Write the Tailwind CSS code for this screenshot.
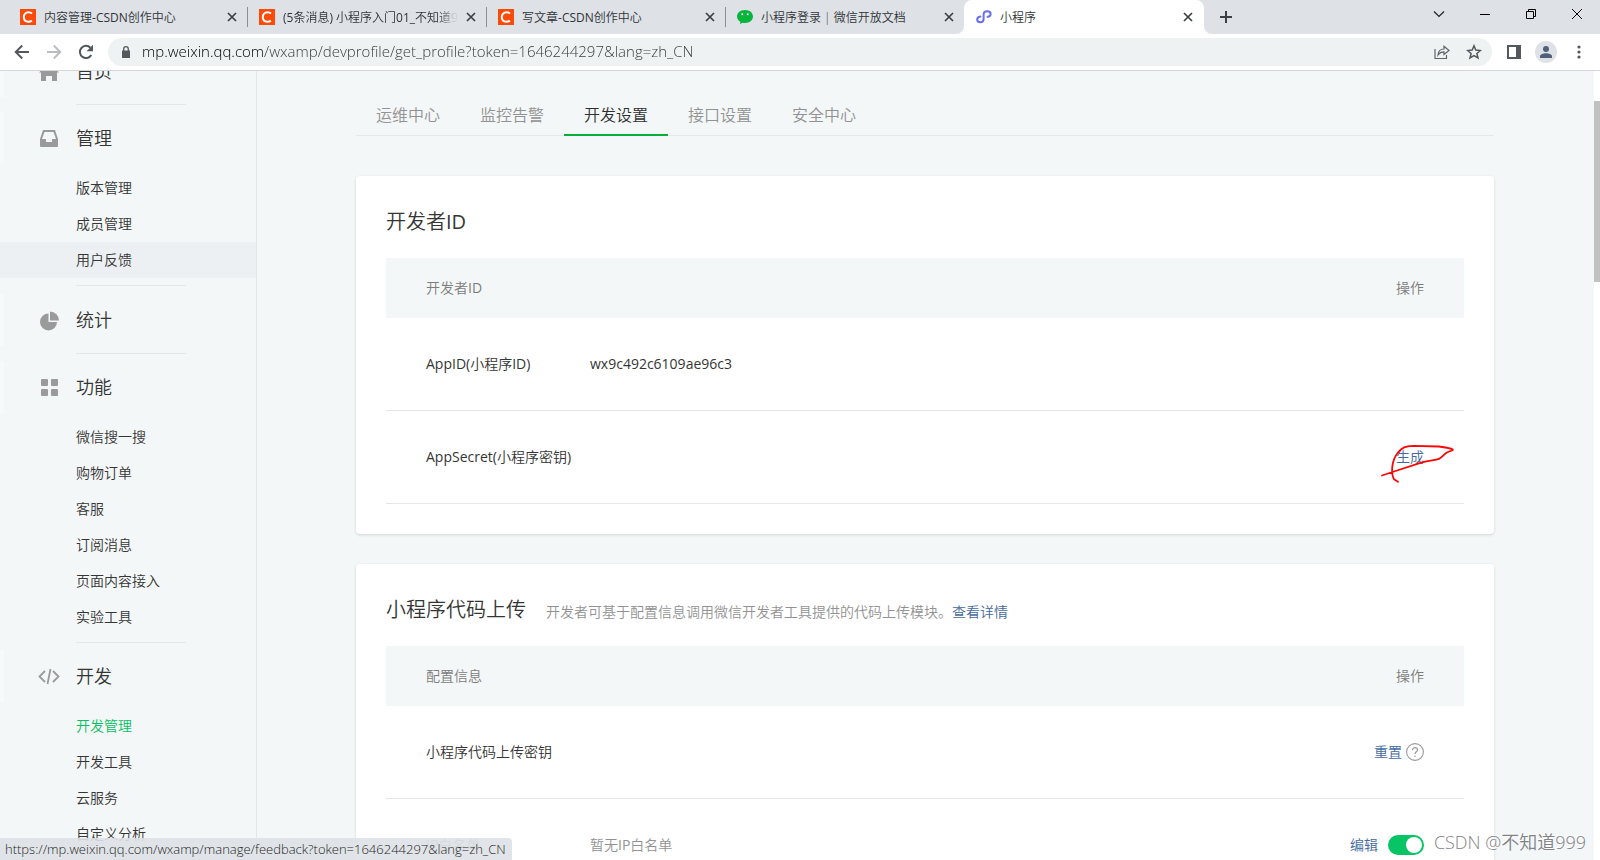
<!DOCTYPE html>
<html lang="zh-CN">
<head>
<meta charset="utf-8">
<title>小程序</title>
<script src="https://cdn.jsdelivr.net/npm/@tailwindcss/browser@4"></script>
</head>
<body class="flex h-screen flex-col overflow-hidden bg-[#f4f7f8] font-['Open_Sans','Noto_Sans_CJK_SC',sans-serif] text-sm font-[350] text-[#353535]">

<!-- Browser tab strip -->
<header class="shrink-0">
  <div class="flex h-[34px] items-stretch bg-[#dee1e6] pl-2 text-xs text-[#303438]">
    <div class="flex min-w-0 basis-[239px] items-center pl-3 pr-[7px]">
      <svg class="size-4 shrink-0" viewBox="0 0 16 16"><path fill="#fc4a08" d="M0 0h16v16H0z"/><path d="M12 4.600C11 3.700 9.800 3.300 8.500 3.300 5.700 3.300 3.800 5.300 3.800 8.100s1.800 4.700 4.500 4.700c1.400 0 2.600-.4 3.600-1.200" fill="none" stroke="#fff" stroke-width="2"/></svg>
      <span class="ml-2 min-w-0 flex-1 overflow-hidden pt-px whitespace-nowrap">内容管理<span class="font-normal">-CSDN</span>创作中心</span>
      <button class="ml-1 flex size-4 items-center justify-center" aria-label="关闭标签页"><svg class="size-[10px]" viewBox="0 0 10 10"><path d="M1 1l8 8M9 1L1 9" stroke="#3c4043" stroke-width="1.700"/></svg></button>
    </div>
    <div class="flex min-w-0 basis-[239px] items-center pr-[7px]">
      <i class="h-5 w-px bg-[#8b8e93]"></i>
      <svg class="ml-[11px] size-4 shrink-0" viewBox="0 0 16 16"><path fill="#fc4a08" d="M0 0h16v16H0z"/><path d="M12 4.600C11 3.700 9.800 3.300 8.500 3.300 5.700 3.300 3.800 5.300 3.800 8.100s1.800 4.700 4.500 4.700c1.400 0 2.600-.4 3.600-1.200" fill="none" stroke="#fff" stroke-width="2"/></svg>
      <span class="ml-2 min-w-0 flex-1 overflow-hidden pt-px whitespace-nowrap [mask-image:linear-gradient(90deg,#000_88%,transparent)]"><span class="font-normal">(5</span>条消息<span class="font-normal">)</span> 小程序入门<span class="font-normal">01_</span>不知道9</span>
      <button class="ml-1 flex size-4 items-center justify-center" aria-label="关闭标签页"><svg class="size-[10px]" viewBox="0 0 10 10"><path d="M1 1l8 8M9 1L1 9" stroke="#3c4043" stroke-width="1.700"/></svg></button>
    </div>
    <div class="flex min-w-0 basis-[239px] items-center pr-[7px]">
      <i class="h-5 w-px bg-[#8b8e93]"></i>
      <svg class="ml-[11px] size-4 shrink-0" viewBox="0 0 16 16"><path fill="#fc4a08" d="M0 0h16v16H0z"/><path d="M12 4.600C11 3.700 9.800 3.300 8.500 3.300 5.700 3.300 3.800 5.300 3.800 8.100s1.800 4.700 4.500 4.700c1.400 0 2.600-.4 3.600-1.200" fill="none" stroke="#fff" stroke-width="2"/></svg>
      <span class="ml-2 min-w-0 flex-1 overflow-hidden pt-px whitespace-nowrap">写文章<span class="font-normal">-CSDN</span>创作中心</span>
      <button class="ml-1 flex size-4 items-center justify-center" aria-label="关闭标签页"><svg class="size-[10px]" viewBox="0 0 10 10"><path d="M1 1l8 8M9 1L1 9" stroke="#3c4043" stroke-width="1.700"/></svg></button>
    </div>
    <div class="flex min-w-0 basis-[239px] items-center pr-[7px]">
      <i class="h-5 w-px bg-[#8b8e93]"></i>
      <svg class="ml-[11px] size-4 shrink-0" viewBox="0 0 16 16"><path fill="#07b53b" d="M8 1c4.500 0 8 2.800 8 6.500S12.500 14 8 14c-.9 0-1.700-.1-2.500-.3L3 15l.3-2.300C1.300 11.500 0 9.700 0 7.500 0 3.800 3.500 1 8 1z"/><circle cx="5.300" cy="5.300" r="1" fill="#fff"/><circle cx="10.700" cy="5.300" r="1" fill="#fff"/></svg>
      <span class="ml-2 min-w-0 flex-1 overflow-hidden pt-px whitespace-nowrap">小程序登录 | 微信开放文档</span>
      <button class="ml-1 flex size-4 items-center justify-center" aria-label="关闭标签页"><svg class="size-[10px]" viewBox="0 0 10 10"><path d="M1 1l8 8M9 1L1 9" stroke="#3c4043" stroke-width="1.700"/></svg></button>
    </div>
    <div class="relative flex min-w-0 basis-[240px] items-center rounded-t-lg bg-white pl-3 pr-2">
      <svg class="absolute bottom-0 right-full size-2" viewBox="0 0 8 8"><path fill="#fff" d="M8 0v8H0a8 8 0 0 0 8-8z"/></svg>
      <svg class="absolute bottom-0 left-full size-2" viewBox="0 0 8 8"><path fill="#fff" d="M0 0v8h8a8 8 0 0 1-8-8z"/></svg>
      <svg class="size-4 shrink-0" viewBox="0 0 16 16"><path d="M4.400 7.400C2.500 7.700 1.200 8.800 1.200 10.500c0 1.700 1.300 2.800 3 2.800 2 0 3.400-1.200 3.400-3.200V5.500c0-2 1.600-3.300 3.700-3.300 1.900 0 3.300 1 3.300 2.700 0 1.600-1.300 2.700-3 2.900" fill="none" stroke="#6a6ff0" stroke-width="2" stroke-linecap="round"/></svg>
      <span class="ml-2 min-w-0 flex-1 overflow-hidden pt-px whitespace-nowrap">小程序</span>
      <button class="ml-1 flex size-4 items-center justify-center" aria-label="关闭标签页"><svg class="size-[10px]" viewBox="0 0 10 10"><path d="M1 1l8 8M9 1L1 9" stroke="#3c4043" stroke-width="1.700"/></svg></button>
    </div>
    <button class="ml-2 flex w-7 items-center justify-center" aria-label="新标签页"><svg class="size-3" viewBox="0 0 12 12"><path d="M6 0v12M0 6h12" stroke="#3c4043" stroke-width="2"/></svg></button>
    <div class="ml-auto flex h-7">
      <button class="flex w-[46px] items-center justify-center" aria-label="搜索标签页"><svg class="h-2 w-3" viewBox="0 0 12 8"><path d="M1 1.500l5 5 5-5" fill="none" stroke="#222" stroke-width="1.200"/></svg></button>
      <button class="flex w-[46px] items-center justify-center" aria-label="最小化"><svg class="h-[2px] w-[10px]" viewBox="0 0 10 2"><path fill="#000" d="M0 1h10v1H0z"/></svg></button>
      <button class="flex w-[46px] items-center justify-center" aria-label="还原"><svg class="size-[10px]" viewBox="0 0 10 10"><path d="M.5 2.500h7v7h-7zM2.500 2.500v-2h7v7h-2" fill="none" stroke="#000"/></svg></button>
      <button class="flex w-[46px] items-center justify-center" aria-label="关闭"><svg class="size-[10px]" viewBox="0 0 10 10"><path d="M0 0l10 10M10 0L0 10" stroke="#000"/></svg></button>
    </div>
  </div>

  <!-- Toolbar -->
  <div class="flex h-[37px] items-center border-b border-[#d5d7da] bg-white pl-[14px] pr-[13px]">
    <button class="mr-4 size-4" aria-label="后退"><svg viewBox="0 0 16 16"><path d="M15 8H2M8.200 1.500L1.700 8l6.500 6.500" fill="none" stroke="#54585c" stroke-width="1.900"/></svg></button>
    <button class="mr-4 size-4" aria-label="前进"><svg viewBox="0 0 16 16"><path d="M1 8h13M7.800 1.500L14.300 8l-6.500 6.500" fill="none" stroke="#babcbe" stroke-width="1.900"/></svg></button>
    <button class="mr-[14px] size-4" aria-label="重新加载"><svg viewBox="0 0 16 16"><path d="M13.300 11a6.100 6.100 0 1 1-.9-7.300" fill="none" stroke="#54585c" stroke-width="2"/><path fill="#54585c" d="M15 .8v6.400H8.600z"/></svg></button>
    <div class="flex h-7 flex-1 items-center rounded-full bg-[#eef2f3] pl-[14px] pr-[10px]">
      <svg class="mr-3 h-3 w-2" viewBox="0 0 8 12"><path fill="#54585c" d="M0 4.500h8V12H0z"/><path d="M1.700 5V3a2.300 2.300 0 0 1 4.600 0v2" fill="none" stroke="#54585c" stroke-width="1.300"/></svg>
      <input aria-label="地址" type="text" value="mp.weixin.qq.com/wxamp/devprofile/get_profile?token=1646244297&amp;lang=zh_CN" class="min-w-0 flex-1 bg-[linear-gradient(90deg,#000_121px,#35393d_121px)] bg-clip-text text-[15px] font-light text-transparent outline-none">
      <button class="mr-4 size-4" aria-label="分享"><svg viewBox="0 0 16 16"><path d="M1 5v9.500h11.500V11M4 11c.3-3.800 2.500-6 6-6V2.300L15 6.500l-5 4V7.800C7.500 7.800 5.500 8.800 4 11z" fill="none" stroke="#5f6368" stroke-width="1.200"/></svg></button>
      <button class="size-4" aria-label="收藏"><svg viewBox="0 0 16 16"><path d="M8 1.800l1.800 4.300 4.600.4-3.500 3 1.100 4.500L8 11.600 4 14l1.100-4.500-3.500-3 4.600-.4z" fill="none" stroke="#54585c" stroke-width="1.500"/></svg></button>
    </div>
    <button class="ml-[15px] size-[14px]" aria-label="侧边栏"><svg viewBox="0 0 14 14"><path fill="#54585c" fill-rule="evenodd" d="M0 0h14v14H0zM2 2v10h7V2z"/></svg></button>
    <button class="ml-[14px] flex size-[22px] items-center justify-center rounded-full bg-[#dee1e6]" aria-label="用户"><svg class="size-3" viewBox="0 0 12 12"><circle cx="6" cy="3" r="3" fill="#51607a"/><path fill="#51607a" d="M0 12v-1.600C0 8.300 3.500 7.300 6 7.300s6 1 6 3.100V12z"/></svg></button>
    <button class="ml-[14px] flex w-4 justify-center" aria-label="菜单"><svg class="h-[14px] w-1" viewBox="0 0 4 14"><g fill="#54585c"><circle cx="2" cy="2" r="1.600"/><circle cx="2" cy="7" r="1.600"/><circle cx="2" cy="12" r="1.600"/></g></svg></button>
  </div>
</header>

<div class="flex min-h-0 flex-1">
  <!-- Side navigation -->
  <aside class="w-[257px] shrink-0 overflow-hidden border-r border-[#e4e6e9]">
    <nav class="-mt-[26px]">
      <h2 class="mb-[7px] flex h-[52px] items-center border-l-4 border-[#f7f9fb] pl-[34px] text-lg">
        <svg class="mr-4 size-[22px]" viewBox="0 0 22 22"><path fill="#9a9a9a" d="M11 2l10 10.500h-2V21h-5v-5H8v5H3v-8.500H1z"/></svg>首页</h2>
      <hr class="ml-[76px] w-[110px] border-[#e4e6e9]">

      <h2 class="mb-[6px] mt-[7px] flex h-[52px] items-center border-l-4 border-[#f7f9fb] pl-[34px] text-lg">
        <svg class="mr-4 size-[22px]" viewBox="0 0 22 22"><path fill="#9a9a9a" fill-rule="evenodd" d="M5 3h12l3 9v7a1 1 0 0 1-1 1H3a1 1 0 0 1-1-1v-7zM6.500 5L4 12h4v3h6v-3h4l-2.500-7z"/></svg>管理</h2>
      <ul class="mb-[7px] leading-9">
        <li><a href="#" class="block pl-[76px]">版本管理</a></li>
        <li><a href="#" class="block pl-[76px]">成员管理</a></li>
        <li><a href="#" class="block bg-[#ecf0f3] pl-[76px]">用户反馈</a></li>
      </ul>
      <hr class="ml-[76px] w-[110px] border-[#e4e6e9]">

      <h2 class="mb-[7px] mt-2 flex h-[52px] items-center border-l-4 border-[#f7f9fb] pl-[34px] text-lg">
        <svg class="mr-4 size-[22px]" viewBox="0 0 22 22"><path fill="#9a9a9a" d="M10.500 4.500V13H19a8.500 8.500 0 1 1-8.500-8.500z"/><path fill="#9a9a9a" d="M12 2.500a9 9 0 0 1 9 9h-9z"/></svg>统计</h2>
      <hr class="ml-[76px] w-[110px] border-[#e4e6e9]">

      <h2 class="mb-[6px] mt-[7px] flex h-[52px] items-center border-l-4 border-[#f7f9fb] pl-[34px] text-lg">
        <svg class="mr-4 size-[22px]" viewBox="0 0 22 22"><g fill="#9a9a9a"><rect x="3" y="3" width="7" height="7" rx="1"/><rect x="13" y="3" width="7" height="7" rx="1"/><rect x="3" y="13" width="7" height="7" rx="1"/><rect x="13" y="13" width="7" height="7" rx="1"/></g></svg>功能</h2>
      <ul class="mb-[7px] leading-9">
        <li><a href="#" class="block pl-[76px]">微信搜一搜</a></li>
        <li><a href="#" class="block pl-[76px]">购物订单</a></li>
        <li><a href="#" class="block pl-[76px]">客服</a></li>
        <li><a href="#" class="block pl-[76px]">订阅消息</a></li>
        <li><a href="#" class="block pl-[76px]">页面内容接入</a></li>
        <li><a href="#" class="block pl-[76px]">实验工具</a></li>
      </ul>
      <hr class="ml-[76px] w-[110px] border-[#e4e6e9]">

      <h2 class="mb-[6px] mt-[7px] flex h-[52px] items-center border-l-4 border-[#f7f9fb] pl-[34px] text-lg">
        <svg class="mr-4 size-[22px]" viewBox="0 0 22 22"><path d="M7 6l-5.500 5.500L7 17M15 6l5.500 5.500L15 17M12.500 4l-3 15" fill="none" stroke="#9a9a9a" stroke-width="1.800"/></svg>开发</h2>
      <ul class="leading-9">
        <li><a href="#" class="block pl-[76px] text-[#07c160]">开发管理</a></li>
        <li><a href="#" class="block pl-[76px]">开发工具</a></li>
        <li><a href="#" class="block pl-[76px]">云服务</a></li>
        <li><a href="#" class="block pl-[76px]">自定义分析</a></li>
      </ul>
    </nav>
  </aside>

  <main class="min-w-0 flex-1 overflow-hidden pl-[99px] pr-[100px] pt-[22px]">
    <nav class="flex h-[43px] border-b border-[#e4e8eb] text-base leading-[45px] text-[#929292]">
      <a href="#" class="h-[43px] px-5">运维中心</a>
      <a href="#" class="h-[43px] px-5">监控告警</a>
      <a href="#" class="h-[43px] border-b-2 border-[#07ae39] px-5 text-[#303030]">开发设置</a>
      <a href="#" class="h-[43px] px-5">接口设置</a>
      <a href="#" class="h-[43px] px-5">安全中心</a>
    </nav>

    <section class="mt-10 rounded bg-white px-[30px] pb-[30px] shadow-[0_1px_3px_rgba(0,0,0,0.14)]">
      <div class="flex h-[82px] items-center pt-[10px]"><h3 class="text-xl">开发者<span class="font-normal">ID</span></h3></div>
      <table class="w-full table-fixed text-left">
        <colgroup><col class="w-[204px]"><col><col class="w-[240px]"></colgroup>
        <thead><tr class="h-[60px] bg-[#f4f7f8] text-[#7c7c7c]">
          <th colspan="2" class="pl-10 font-[350]">开发者<span class="font-normal">ID</span></th><th class="pr-10 text-right font-[350]">操作</th></tr></thead>
        <tbody>
          <tr class="h-[92px] border-b border-[#e4e6e9]"><td class="pl-10"><span class="font-normal">AppID(</span>小程序<span class="font-normal">ID)</span></td><td class="font-normal">wx9c492c6109ae96c3</td><td></td></tr>
          <tr class="h-[93px] border-b border-[#e4e6e9]"><td colspan="2" class="pl-10"><span class="font-normal">AppSecret(</span>小程序密钥<span class="font-normal">)</span></td><td class="pr-10 text-right">
            <span class="relative inline-block h-5"><a href="#" class="text-[#44699e]">生成</a>
              <svg class="absolute -left-[18px] -top-[7px] h-11 w-20 max-w-none" viewBox="0 0 80 44"><path d="M4 35.500L14.500 32 44 22.400C51 20 57 20.500 61 18.800 65 17 66 14 69 12.500S75 10.500 75 9.800 68 7.300 61 6.500L35 5.800C27 6 24.500 7.500 20 12.500 13 21 13 34 16 39.200L20 41.800" fill="none" stroke="#fb0505" stroke-width="1.800" stroke-linecap="round" stroke-linejoin="round"/></svg>
            </span></td></tr>
        </tbody>
      </table>
    </section>

    <section class="mt-[30px] rounded bg-white px-[30px] pb-[30px] shadow-[0_1px_3px_rgba(0,0,0,0.14)]">
      <div class="flex h-[82px] items-center pt-[10px]"><div class="flex items-baseline gap-5 whitespace-nowrap"><h3 class="text-xl">小程序代码上传</h3><p class="text-[#929292]">开发者可基于配置信息调用微信开发者工具提供的代码上传模块。<a href="#" class="text-[#44699e]">查看详情</a></p></div></div>
      <table class="w-full table-fixed text-left">
        <colgroup><col class="w-[204px]"><col><col class="w-[240px]"></colgroup>
        <thead><tr class="h-[60px] bg-[#f4f7f8] text-[#7c7c7c]">
          <th colspan="2" class="pl-10 font-[350]">配置信息</th><th class="pr-10 text-right font-[350]">操作</th></tr></thead>
        <tbody>
          <tr class="h-[93px] border-b border-[#e4e6e9]"><td colspan="2" class="pl-10">小程序代码上传密钥</td><td class="pr-10">
            <div class="flex items-center justify-end gap-1"><a href="#" class="text-[#44699e]">重置</a>
              <button aria-label="帮助" class="size-[18px]"><svg viewBox="0 0 18 18"><circle cx="9" cy="9" r="8.400" fill="none" stroke="#9a9a9a" stroke-width="1.100"/><path d="M6.500 7.200C6.500 5.600 7.600 4.600 9 4.600s2.500.9 2.500 2.300c0 1.900-2.500 2-2.500 4.200" fill="none" stroke="#9a9a9a" stroke-width="1.200"/><circle cx="9" cy="13.200" r=".8" fill="#9a9a9a"/></svg></button></div></td></tr>
          <tr class="h-[92px] border-b border-[#e4e6e9] text-[#929292]"><td class="pl-10"><span class="font-normal">IP</span>白名单</td><td>暂无<span class="font-normal">IP</span>白名单</td><td class="pr-10">
            <div class="flex items-center justify-end gap-[10px]"><a href="#" class="text-[#44699e]">编辑</a>
              <input type="checkbox" role="switch" checked aria-label="IP白名单开关" class="h-5 w-9 appearance-none rounded-full bg-[#07c565] p-[2px] before:ml-4 before:block before:size-4 before:rounded-full before:bg-white"></div></td></tr>
        </tbody>
      </table>
    </section>
  </main>

  <!-- Scrollbar -->
  <div class="w-[6px] shrink-0 bg-white pt-[30px]"><div class="h-[181px] bg-[#c1c1c1]"></div></div>
</div>

<div class="absolute bottom-0 left-0 flex h-[22px] w-[512px] items-center rounded-tr bg-[#dee1e6]/90 pl-[5px] text-[13px] font-light whitespace-nowrap text-[#1c1f23]">https://mp.weixin.qq.com/wxamp/manage/feedback?token=1646244297&amp;lang=zh_CN</div>
<div class="absolute bottom-[4px] right-[14px] text-lg whitespace-nowrap text-[#808284] [text-shadow:-1px_-1px_0_#fff]">CSDN @不知道999</div>
</body>
</html>
